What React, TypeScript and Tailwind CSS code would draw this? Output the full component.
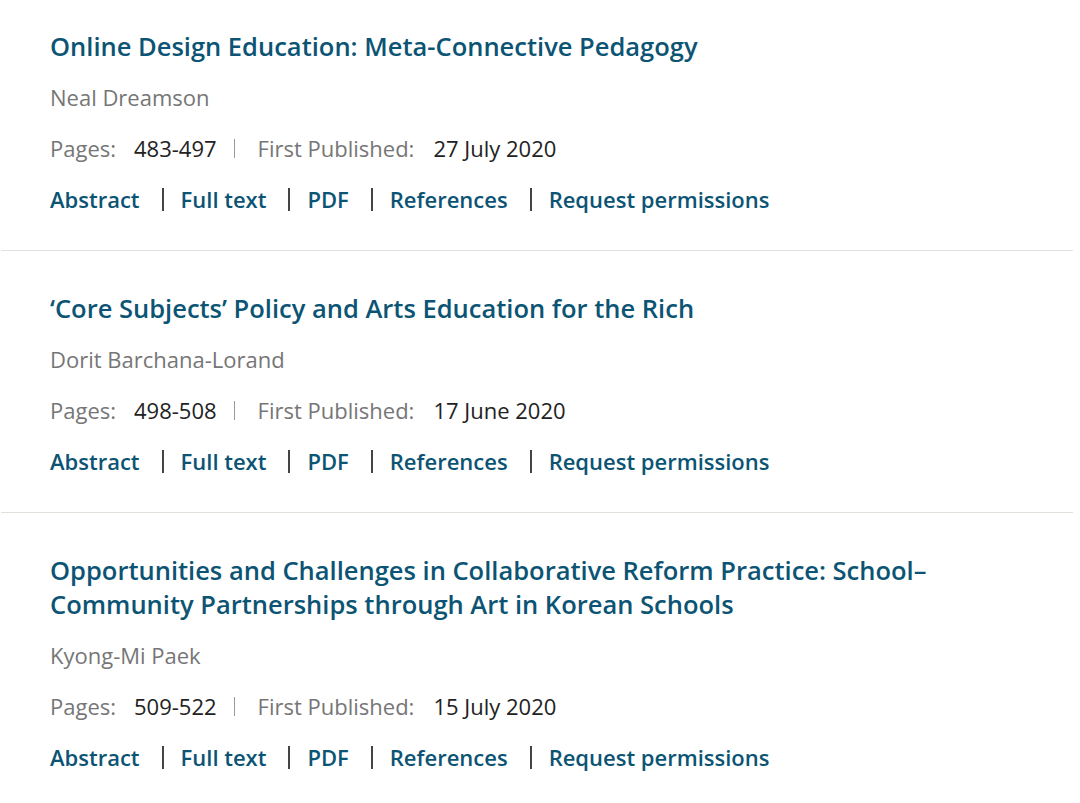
import React from 'react';

type Article = {
  title: string;
  author: string;
  pages: string;
  published: string;
};

const ARTICLES: Article[] = [
  {
    title: 'Online Design Education: Meta-Connective Pedagogy',
    author: 'Neal Dreamson',
    pages: '483-497',
    published: '27 July 2020',
  },
  {
    title: '\u2018Core Subjects\u2019 Policy and Arts Education for the Rich',
    author: 'Dorit Barchana-Lorand',
    pages: '498-508',
    published: '17 June 2020',
  },
  {
    title:
      'Opportunities and Challenges in Collaborative Reform Practice: School\u2013 Community Partnerships through Art in Korean Schools',
    author: 'Kyong-Mi Paek',
    pages: '509-522',
    published: '15 July 2020',
  },
];

const LINKS = ['Abstract', 'Full text', 'PDF', 'References', 'Request permissions'];

const App: React.FC = () => {
  return (
    <div className="min-h-screen bg-white font-['Open_Sans',sans-serif]">
      <div className="ml-px w-[1072px]">
        {ARTICLES.map((a, i) => (
          <div
            key={i}
            className={`pl-[49px] ${i === 0 ? 'pt-[29px] pb-[36px]' : 'pt-[40px] pb-[36px]'} ${
              i < ARTICLES.length - 1 ? 'border-b border-[#e3dfdb]' : ''
            }`}
          >
            <h3 className="max-w-[980px] text-[25.5px] leading-[34px] font-semibold text-[#0c5474]">
              {a.title}
            </h3>
            <p className="mt-[19px] text-[22px] leading-[30px] text-[#767676]">{a.author}</p>
            <div className="mt-[21px] flex items-center text-[22px] leading-[30px]">
              <span className="text-[#767676]">Pages:</span>
              <span className="ml-[18px] text-[#222]">{a.pages}</span>
              <span className="ml-[17px] mr-[23px] h-[19px] w-px bg-[#999]" />
              <span className="text-[#767676]">First Published:</span>
              <span className="ml-[19px] text-[#222]">{a.published}</span>
            </div>
            <div className="mt-[21px] flex items-center text-[22px] leading-[30px] font-semibold">
              {LINKS.map((l, j) => (
                <React.Fragment key={l}>
                  {j > 0 && <span className="ml-[22px] mr-[17px] h-[23px] w-[2px] bg-[#444]" />}
                  <a href="#" className="text-[#0c5474]">
                    {l}
                  </a>
                </React.Fragment>
              ))}
            </div>
          </div>
        ))}
      </div>
    </div>
  );
};

export default App;
